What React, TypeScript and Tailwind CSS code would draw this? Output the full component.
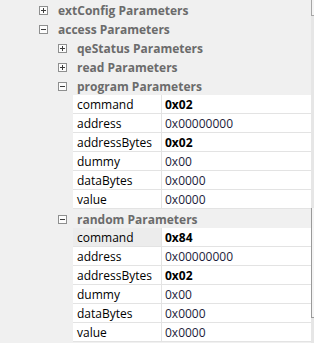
import React from 'react';

type Prop = { name: string; value: string; bold?: boolean; selected?: boolean };

const programProps: Prop[] = [
  { name: 'command', value: '0x02', bold: true },
  { name: 'address', value: '0x00000000' },
  { name: 'addressBytes', value: '0x02', bold: true },
  { name: 'dummy', value: '0x00' },
  { name: 'dataBytes', value: '0x0000' },
  { name: 'value', value: '0x0000' },
];

const randomProps: Prop[] = [
  { name: 'command', value: '0x84', bold: true, selected: true },
  { name: 'address', value: '0x00000000' },
  { name: 'addressBytes', value: '0x02', bold: true },
  { name: 'dummy', value: '0x00' },
  { name: 'dataBytes', value: '0x0000' },
  { name: 'value', value: '0x0000' },
];

const Toggle = ({ open }: { open: boolean }) => (
  <svg width="9" height="9" viewBox="0 0 9 9" className="shrink-0">
    <rect x="0.5" y="0.5" width="8" height="8" fill="#fcfcfc" stroke="#8e8f8f" />
    <line x1="2" y1="4.5" x2="7" y2="4.5" stroke="#3c3c3c" />
    {!open && <line x1="4.5" y1="2" x2="4.5" y2="7" stroke="#3c3c3c" />}
  </svg>
);

const Group = ({ label, level, open }: { label: string; level: number; open: boolean }) => (
  <div
    className={`flex h-[19px] items-center gap-[10px] pt-[1px] ${level === 0 ? 'pl-[39px]' : 'pl-[58px]'}`}
  >
    <Toggle open={open} />
    <span className="pt-[2px] font-bold text-[#6b6b6b] leading-none">{label}</span>
  </div>
);

const Row = ({ p }: { p: Prop }) => (
  <div className="flex h-[19px] pl-[73px]">
    <div
      className={`flex w-[89px] items-center border-b border-r border-[#e3e3e3] pl-[4px] pt-[2px] text-black ${
        p.selected ? 'bg-[#ececec]' : 'bg-white'
      }`}
    >
      {p.name}
    </div>
    <div
      className={`flex flex-1 items-center border-b border-[#e3e3e3] bg-white pl-[3px] pt-[2px] ${
        p.bold ? 'font-bold text-black' : 'text-[#1c1c3a]'
      }`}
    >
      {p.value}
    </div>
  </div>
);

export default function App() {
  return (
    <div
      className="flex h-[343px] w-[314px] overflow-hidden bg-[#f0f0f0] text-[12px]"
      style={{ fontFamily: '"Open Sans", "Noto Sans", sans-serif' }}
    >
      <div className="flex-1">
        <Group label="extConfig Parameters" level={0} open={false} />
        <Group label="access Parameters" level={0} open={true} />
        <Group label="qeStatus Parameters" level={1} open={false} />
        <Group label="read Parameters" level={1} open={false} />
        <Group label="program Parameters" level={1} open={true} />
        {programProps.map((p) => (
          <Row key={'p' + p.name} p={p} />
        ))}
        <Group label="random Parameters" level={1} open={true} />
        {randomProps.map((p) => (
          <Row key={'r' + p.name} p={p} />
        ))}
      </div>
      {/* scrollbar edge */}
      <div className="flex w-[3px] flex-col">
        <div className="h-[16px] border-b border-l border-[#a6a6a6] bg-[#f4f4f4]" />
        <div className="h-[192px] bg-[#e6e6e6]" />
        <div className="h-[110px] border-b border-l border-[#9a9a9a] bg-[#f4f4f4]" />
        <div className="flex-1 bg-[#e6e6e6]" />
      </div>
    </div>
  );
}
